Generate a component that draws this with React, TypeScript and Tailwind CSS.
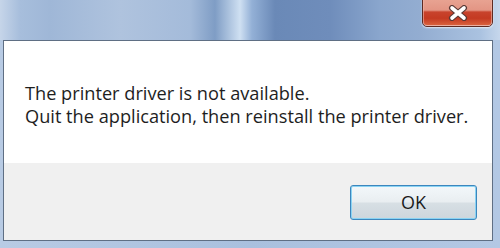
import React from 'react';

const CloseGlyph: React.FC = () => (
  <svg width="20" height="16" viewBox="0 0 20 16">
    <path d="M4 3 L16 13 M16 3 L4 13" stroke="#5a3a36" strokeWidth="6" strokeLinecap="round" />
    <path d="M4 3 L16 13 M16 3 L4 13" stroke="#ffffff" strokeWidth="3.6" strokeLinecap="round" />
  </svg>
);

const CloseButton: React.FC = () => (
  <div className="relative mt-[-4px] mr-[7px] h-[31px] w-[71px] rounded-b-[5px] border border-[#5e2a22] shadow-[0_1px_2px_rgba(255,255,255,0.7)] overflow-hidden">
    <div className="h-full w-full bg-[linear-gradient(to_bottom,#e9a594_0%,#e39584_45%,#c8432c_52%,#c43a22_75%,#d8603c_100%)] border border-[#f0b8aa]/60 rounded-b-[4px] flex items-center justify-center pt-[3px]">
      <CloseGlyph />
    </div>
  </div>
);

const App: React.FC = () => {
  return (
    <div className="w-[500px] h-[248px] overflow-hidden flex flex-col bg-[linear-gradient(to_right,#b8cbe4_0%,#a9c0de_50%,#b3c8e4_100%)] font-['Open_Sans',sans-serif]">
      {/* title bar (aero glass, blurred) */}
      <div className="h-[40px] flex justify-end items-start bg-[linear-gradient(to_right,#c6d5e9_0px,#a7bedc_20px,#9fb7d7_50px,#afc3de_120px,#a4bbda_190px,#7f9dc5_215px,#cfe0f2_240px,#93b0d6_252px,#6a89b7_275px,#6f8dbb_330px,#8aa6cd_380px,#93add1_420px,#aac2e0_480px,#c6d7ec_500px)]">
        <CloseButton />
      </div>

      {/* client area */}
      <div className="ml-[3px] mr-[7px] h-[201px] border border-[#5f6f84] flex flex-col">
        <div className="flex-1 bg-white px-[21px] pt-[41px] text-[18.2px] leading-[23px] text-[#1e1e1e]">
          <p>The printer driver is not available.</p>
          <p>Quit the application, then reinstall the printer driver.</p>
        </div>
        <div className="h-[77px] bg-[#f0f0f0] flex justify-end items-start pt-[22px] pr-[15px]">
          <button className="w-[127px] h-[35px] rounded-[3px] border border-[#3c86bd] shadow-[inset_0_0_0_1px_#8ad3f3] bg-[linear-gradient(to_bottom,#f2f7fa_0%,#e9eef1_48%,#d7dfe4_52%,#cdd6dc_100%)] text-[18px] text-[#1b1b1b] flex items-center justify-center">
            OK
          </button>
        </div>
      </div>
    </div>
  );
};

export default App;
